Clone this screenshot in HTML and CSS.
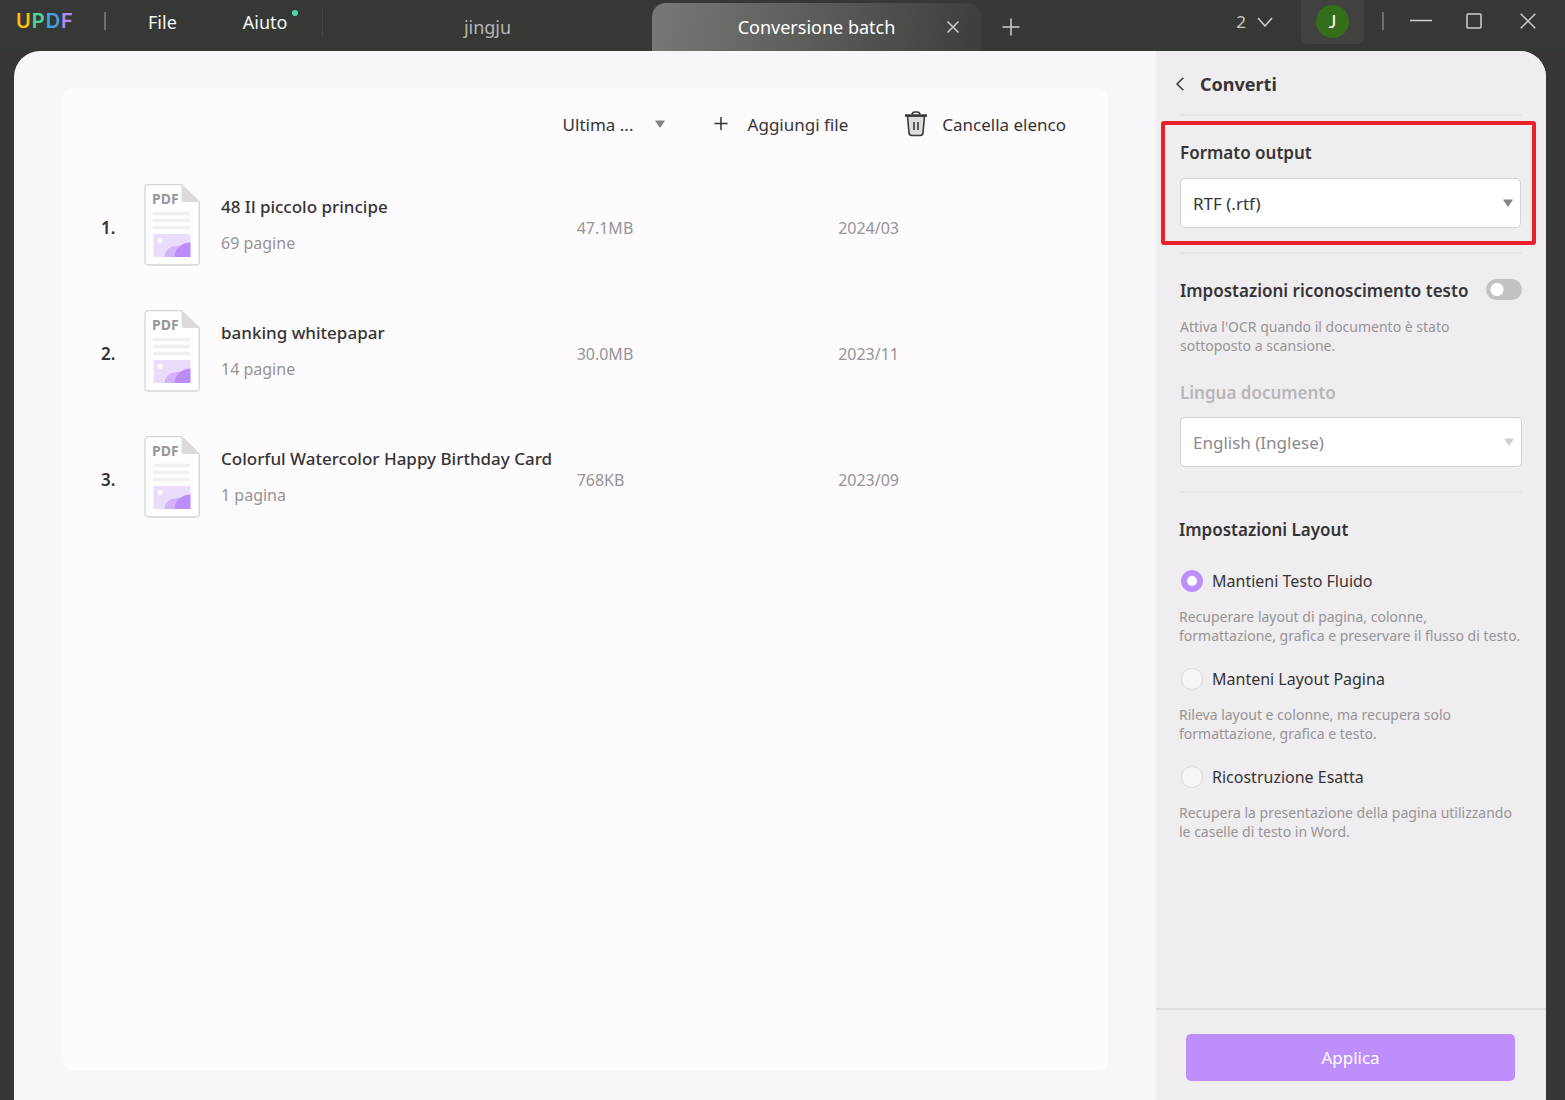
FILE: index.html
```html
<!DOCTYPE html>
<html lang="it">
<head>
<meta charset="utf-8">
<meta name="viewport" content="width=device-width, initial-scale=1">
<title>UPDF - Conversione batch</title>
<link rel="stylesheet" href="styles.css">
</head>
<body>
<svg class="defs" aria-hidden="true">
  <symbol id="file-pdf" viewBox="0 0 56 82">
    <path d="M4 .7h33.500L55.300 18v60a3 3 0 0 1-3 3H4a3 3 0 0 1-3-3V3.700a3 3 0 0 1 3-3z" fill="#fff" stroke="#d6d4d7" stroke-width="1.300"/>
    <path d="M37.500 1v14a3 3 0 0 0 3 3h14.500z" fill="#dcdadd"/>
    <text x="8" y="20" class="file-tag">PDF</text>
    <path d="M9 29.500h37M9 36.500h37M9 43.500h37" stroke="#f1eff1" stroke-width="3.500"/>
    <path d="M9.500 50h37v23h-37z" fill="#eaddfc"/>
    <circle cx="16" cy="56.500" r="2.500" fill="#fff"/>
    <path d="M20.500 73c0-6 5-11 12-11h4v11z" fill="#d3b4fc"/>
    <path d="M30.500 73c0-8 7-14.500 16-14.500v14.500z" fill="#bd8cfb"/>
  </symbol>
  <symbol id="caret" viewBox="0 0 10 8">
    <path d="M.8.5h8.400q.9 0 .4.800L5.800 7q-.8 1-1.600 0L.4 1.300Q-.1.500.8.500z" fill="currentColor"/>
  </symbol>
</svg>

<header class="titlebar">
  <div class="brand"><span class="u">U</span><span class="p">P</span><span class="d">D</span><span class="f">F</span></div>
  <nav class="menu">
    <button type="button">File</button>
    <button type="button">Aiuto<i class="dot"></i></button>
  </nav>
  <div class="tabs">
    <button type="button" class="tab">jingju</button>
    <div class="tab active">
      <button type="button" class="tab-name">Conversione batch</button>
      <button type="button" class="tab-close" aria-label="Chiudi scheda">
        <svg width="14" height="14" viewBox="0 0 14 14"><path d="M1.500 1.500l11 11M12.500 1.500l-11 11"/></svg>
      </button>
    </div>
    <button type="button" class="tab-add" aria-label="Nuova scheda">
      <svg width="18" height="18" viewBox="0 0 18 18"><path d="M9 .5v17M.5 9h17"/></svg>
    </button>
  </div>
  <button type="button" class="count">2
    <svg width="16" height="10" viewBox="0 0 16 10"><path d="M1 1l7 8 7-8"/></svg>
  </button>
  <button type="button" class="account"><span class="avatar">J</span></button>
  <div class="window-buttons">
    <button type="button" aria-label="Riduci"><svg width="22" height="18" viewBox="0 0 22 18"><path d="M0 8.500h22"/></svg></button>
    <button type="button" aria-label="Ingrandisci"><svg width="16" height="16" viewBox="0 0 16 16"><rect x="1" y="1" width="14" height="14" rx="1"/></svg></button>
    <button type="button" aria-label="Chiudi"><svg width="16" height="16" viewBox="0 0 16 16"><path d="M.7.7l14.600 14.600M15.300.7L.7 15.300"/></svg></button>
  </div>
</header>

<div class="window">
  <main class="content">
    <section class="card">
      <div class="toolbar">
        <div class="pick sort">
          <select aria-label="Ordina per"><option>Ultima ...</option></select>
          <svg class="caret" width="10" height="8"><use href="#caret"/></svg>
        </div>
        <button type="button" class="add-file">
          <svg width="14" height="14" viewBox="0 0 14 14"><path d="M7 0v13M.5 6.500h13" stroke="#333" stroke-width="1.500"/></svg>
          Aggiungi file
        </button>
        <button type="button" class="clear">
          <svg width="22" height="26" viewBox="0 0 22 26" fill="none" stroke="#3a393a" stroke-width="1.600">
            <path d="M2.500 5l1.500 17q.3 2.500 3 2.500h8q2.700 0 3-2.500l1.500-17z" fill="#dddcdd"/>
            <path d="M0 4.500h22" stroke-width="2.600"/>
            <path d="M7 3.500q.5-2.500 2.500-2.500h3q2 0 2.500 2.500M9 11v8M13 11v8"/>
          </svg>
          Cancella elenco
        </button>
      </div>
      <table class="files">
        <colgroup><col class="c-num"><col class="c-icon"><col class="c-name"><col class="c-size"><col></colgroup>
        <tbody>
          <tr>
            <td class="num">1.</td>
            <td><svg class="file" width="56" height="82"><use href="#file-pdf"/></svg></td>
            <td><div class="name">48 Il piccolo principe</div><div class="pages">69 pagine</div></td>
            <td class="meta">47.1MB</td>
            <td class="meta">2024/03</td>
          </tr>
          <tr>
            <td class="num">2.</td>
            <td><svg class="file" width="56" height="82"><use href="#file-pdf"/></svg></td>
            <td><div class="name">banking whitepapar</div><div class="pages">14 pagine</div></td>
            <td class="meta">30.0MB</td>
            <td class="meta">2023/11</td>
          </tr>
          <tr>
            <td class="num">3.</td>
            <td><svg class="file" width="56" height="82"><use href="#file-pdf"/></svg></td>
            <td><div class="name">Colorful Watercolor Happy Birthday Card</div><div class="pages">1 pagina</div></td>
            <td class="meta">768KB</td>
            <td class="meta">2023/09</td>
          </tr>
        </tbody>
      </table>
    </section>
  </main>

  <aside class="panel">
    <form class="settings">
      <div class="panel-head">
        <button type="button" aria-label="Indietro"><svg width="8" height="14" viewBox="0 0 8 14"><path d="M7.300.7L1 7l6.300 6.300"/></svg></button>
        <h1>Converti</h1>
      </div>
      <hr>
      <section class="format">
        <label class="title" for="format">Formato output</label>
        <div class="pick box">
          <select id="format"><option>RTF (.rtf)</option></select>
          <svg class="caret" width="10" height="8"><use href="#caret"/></svg>
        </div>
      </section>
      <hr>
      <section class="ocr">
        <div class="switch-row">
          <label class="title" for="ocr">Impostazioni riconoscimento testo</label>
          <input type="checkbox" id="ocr" class="switch">
        </div>
        <p class="hint">Attiva l'OCR quando il documento è stato<br>sottoposto a scansione.</p>
        <label class="title off" for="lang">Lingua documento</label>
        <div class="pick box off">
          <select id="lang" disabled><option>English (Inglese)</option></select>
          <svg class="caret" width="10" height="8"><use href="#caret"/></svg>
        </div>
      </section>
      <hr>
      <section class="layout">
        <h2 class="title">Impostazioni Layout</h2>
        <div class="choice">
          <label><input type="radio" name="layout" checked>Mantieni Testo Fluido</label>
          <p class="hint">Recuperare layout di pagina, colonne,<br>formattazione, grafica e preservare il flusso di testo.</p>
        </div>
        <div class="choice">
          <label><input type="radio" name="layout">Manteni Layout Pagina</label>
          <p class="hint">Rileva layout e colonne, ma recupera solo<br>formattazione, grafica e testo.</p>
        </div>
        <div class="choice">
          <label><input type="radio" name="layout">Ricostruzione Esatta</label>
          <p class="hint">Recupera la presentazione della pagina utilizzando<br>le caselle di testo in Word.</p>
        </div>
      </section>
    </form>
    <div class="panel-foot"><button type="button" class="apply">Applica</button></div>
  </aside>
</div>
</body>
</html>
```
FILE: styles.css
```css
* { box-sizing: border-box; }

body {
  margin: 0;
  min-height: 100vh;
  display: flex;
  flex-direction: column;
  background: #373536;
  color: #363436;
  font-family: "Noto Sans", "Open Sans", sans-serif;
  font-size: 17px;
}

button, select {
  appearance: none;
  margin: 0;
  padding: 0;
  border: 0;
  background: none;
  color: inherit;
  font: inherit;
}

h1, h2, p { margin: 0; }
svg { display: block; flex: none; }
.defs { display: none; }

/* Title bar */
.titlebar {
  display: flex;
  align-items: center;
  height: 51px;
  padding-right: 29px;
  background: #363835;
  color: #f4f4f4;
}
.titlebar svg { fill: none; stroke: #cfcfce; stroke-width: 1.500; }

.brand {
  display: flex;
  align-items: center;
  gap: 1px;
  width: 106px;
  margin-bottom: 10px;
  padding-left: 16px;
  font: 600 20px/26px Inter, sans-serif;
}
.brand::after {
  content: "";
  width: 2px;
  height: 18px;
  margin-left: auto;
  background: #6d6e6c;
}
.u { color: #fbbf10; }
.p { color: #4fd596; }
.d { color: #45a0e0; }
.f { color: #b88af0; }

.menu {
  display: flex;
  align-items: center;
  gap: 66px;
  width: 217px;
  height: 31px;
  margin-bottom: 6px;
  padding: 0 0 2px 42px;
  border-right: 1px solid #464745;
  font-size: 18px;
}
.menu button { position: relative; }
.dot {
  position: absolute;
  top: 0;
  right: -11px;
  width: 6px;
  height: 6px;
  border-radius: 50%;
  background: #4adba4;
}

.tabs {
  display: flex;
  flex: 1;
  align-self: flex-end;
  align-items: center;
  height: 48px;
  font-size: 18px;
}
.tab { width: 329px; color: #b5b6b4; }
.tab.active {
  display: grid;
  grid-template-columns: 1fr 14px;
  align-items: center;
  height: 48px;
  padding: 0 21px;
  border-radius: 14px 14px 0 0;
  background: linear-gradient(100deg, #777977, #5b5c59 50%, #3d3d3b);
  color: #fff;
}
.tab-name { padding-left: 14px; }
.tab-add { margin-left: 21px; }

.count {
  display: flex;
  align-items: center;
  gap: 11px;
  margin-bottom: 8px;
  color: #c8c9c7;
}
.account {
  align-self: flex-start;
  width: 63px;
  height: 44px;
  margin-left: 28px;
  border-radius: 0 0 6px 6px;
  background: #414240;
}
.avatar {
  display: block;
  width: 33px;
  height: 33px;
  margin: -2px auto 0;
  border-radius: 50%;
  background: #356e1b;
  color: #fff;
  font: 18px/33px Lato, sans-serif;
}
.window-buttons {
  display: flex;
  align-items: center;
  gap: 38px;
  height: 18px;
  margin: 0 0 10px 18px;
  padding-left: 26px;
  border-left: 2px solid #6d6e6c;
}
.window-buttons button:first-child { margin-right: -4px; }

/* Window body */
.window {
  flex: 1;
  display: flex;
  margin: 0 19px 0 14px;
  overflow: hidden;
  border-radius: 26px 26px 0 0;
  background: #f7f6f8;
}
.content {
  flex: 1;
  display: flex;
  padding: 37px 48px 30px;
}
.card {
  flex: 1;
  border-radius: 10px;
  background: #fdfbfd;
}

.pick { display: grid; align-items: center; }
.pick select, .pick .caret { grid-area: 1 / 1; }
.pick .caret { justify-self: end; pointer-events: none; color: #858385; }

.toolbar {
  display: flex;
  justify-content: flex-end;
  align-items: center;
  height: 74px;
  padding: 0 42px 2px 0;
}
.toolbar button { display: flex; align-items: center; }
.sort { width: 102px; }
.add-file { gap: 20px; margin-left: 49px; }
.clear { gap: 15px; margin-left: 57px; }

.files {
  width: 100%;
  table-layout: fixed;
  border-collapse: collapse;
}
.c-num { width: 82px; }
.c-icon { width: 77px; }
.c-name { width: 34%; }
.c-size { width: 25%; }
.files td { height: 126px; padding: 0; }
.files .num { padding: 4px 0 0 39px; font-weight: 600; }
.files .meta { padding-top: 6px; }
.name { margin-bottom: 12px; font-weight: 500; line-height: 25px; white-space: nowrap; }
.pages, .meta { color: #969496; font-size: 16px; line-height: 24px; }
.file-tag { fill: #979597; font: 700 14px "Noto Sans", sans-serif; }
.files .name + .pages { padding-bottom: 2px; }

/* Settings panel */
.panel {
  display: flex;
  flex-direction: column;
  flex: none;
  width: 390px;
  background: #efedef;
}
.settings { flex: 1; }
.panel-head {
  display: flex;
  align-items: center;
  gap: 16px;
  height: 63px;
  padding: 3px 20px 0;
}
.panel-head svg { fill: none; stroke: #333; stroke-width: 1.500; }
h1 { font-size: 18px; font-weight: 700; }
hr {
  height: 2px;
  margin: 0 24px;
  border: 0;
  background: #e7e5e7;
}
.title {
  display: block;
  font-size: 17px;
  font-weight: 600;
  line-height: 24px;
}
.title.off { color: #b8b6b8; }
.format {
  margin: 5px 10px 7px 5px;
  padding: 16px 11px 13px 15px;
  border: 4px solid #e8212b;
  border-radius: 3px;
  background: #eeeeee;
}
.box { margin-top: 13px; }
.box select {
  height: 50px;
  padding: 0 12px;
  border: 1px solid #d5d3d5;
  border-radius: 5px;
  background: #fff;
}
.box .caret { margin-right: 8px; }
.box.off select { color: #8b898b; opacity: 1; }
.box.off .caret { color: #d2d0d2; }

.ocr { padding: 25px 24px 24px; }
.switch-row { display: flex; align-items: flex-start; justify-content: space-between; }
.switch {
  appearance: none;
  flex: none;
  width: 36px;
  height: 21px;
  margin: 0;
  border-radius: 11px;
  background: radial-gradient(circle at 11px 50%, #fff 6px, transparent 7px) #c3c1c3;
}
.hint {
  color: #969496;
  font-size: 14px;
  line-height: 19px;
  white-space: nowrap;
}
.ocr .hint { margin: 14px 0 26px; }
.ocr .box { margin-top: 12px; }

.layout { padding: 25px 24px 24px 23px; }
.layout .title { margin-bottom: 27px; }
.choice { margin-bottom: 22px; }
.choice label {
  display: flex;
  align-items: center;
  gap: 9px;
  height: 24px;
  margin-bottom: 14px;
  font-size: 16px;
}
.choice input {
  appearance: none;
  width: 22px;
  height: 22px;
  margin: 0 0 0 2px;
  border: 1px solid #dcdadc;
  border-radius: 50%;
  background: #f7f5f7;
}
.choice input:checked { border: 6px solid #be8efc; background: #fff; }

.panel-foot {
  padding: 24px 31px 19px 30px;
  border-top: 2px solid #dfdddf;
}
.apply {
  width: 100%;
  height: 47px;
  border-radius: 5px;
  background: #be8efd;
  color: #fff;
}
```
